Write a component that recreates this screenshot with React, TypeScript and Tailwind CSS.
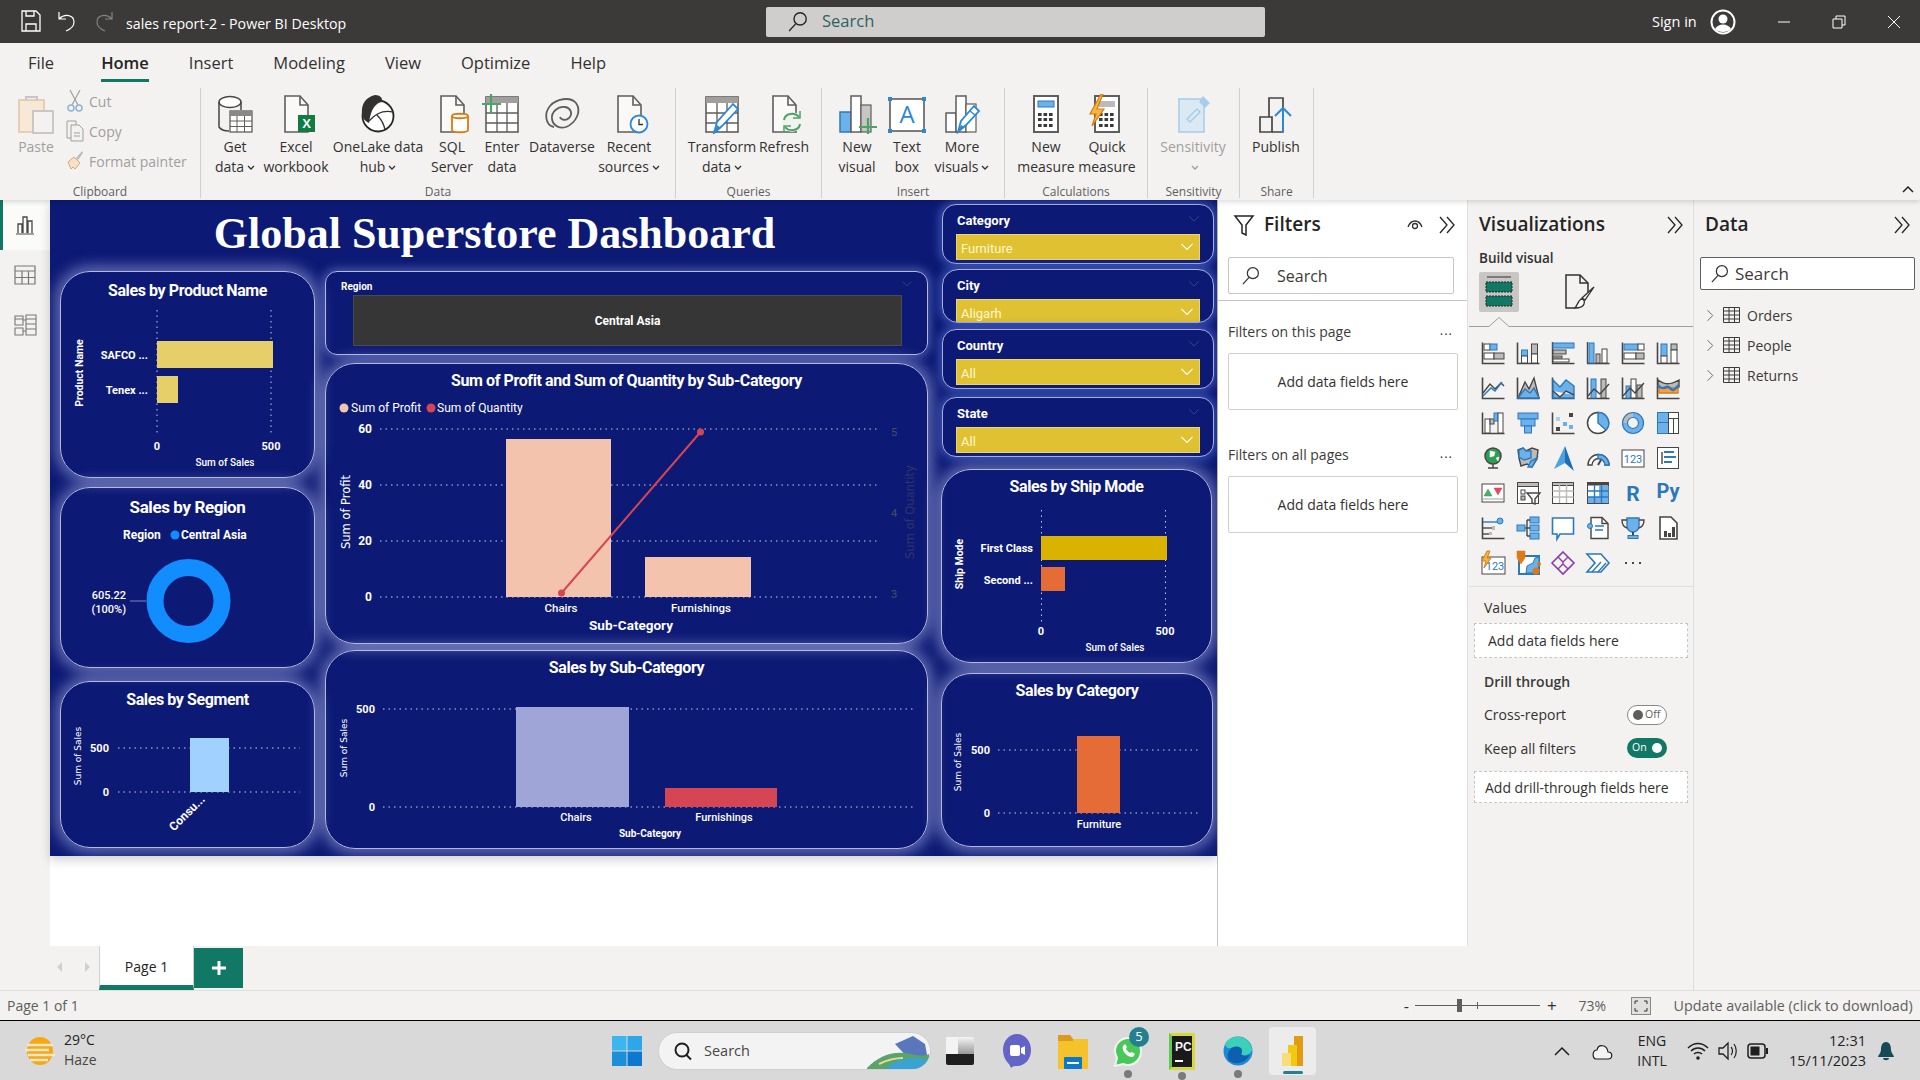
import React from "react";

const D = "#484644";
const B = "#6cb1ea";
const BS = "#2b79bd";
const G = "#bdbbb9";
const W = "#ffffff";

const r = (x: number, y: number, w: number, h: number, f: string, s: string = "none", k?: number) => (
  <rect key={k ?? `${x}-${y}-${w}-${h}-${f}`} x={x} y={y} width={w} height={h} fill={f} stroke={s} strokeWidth={1} />
);
const p = (d: string, s: string = D, f: string = "none", sw: number = 1.4) => (
  <path key={d} d={d} stroke={s} fill={f} strokeWidth={sw} />
);
const Ax = p("M1.5 1.5V22.5H23.5", D, "none", 1.6);
const Bot = p("M1 22.5H23.5", D, "none", 1.6);

function Ic({ children, s = 24, vb = 24 }: { children: React.ReactNode; s?: number; vb?: number }) {
  return (
    <svg width={s} height={s} viewBox={`0 0 ${vb} ${vb}`} className="block shrink-0 overflow-visible">
      {children}
    </svg>
  );
}

const vizIcons: React.ReactNode[] = [
  <>{Ax}{r(3, 3, 6, 6, W, D)}{r(9, 3, 7, 6, B, BS)}{r(3, 12, 10, 6, W, D)}{r(13, 12, 10, 6, G, D)}</>,
  <>{Ax}{r(5.5, 9, 6, 6, B, BS)}{r(5.5, 15, 6, 7, W, D)}{r(15.5, 3, 6, 10, G, D)}{r(15.5, 13, 6, 9, W, D)}</>,
  <>{p("M1.5 1V22.5H23.5", D)}{r(2, 2, 21, 5, B, BS)}{r(2, 9, 13, 4, G, D)}{r(2, 15, 9, 2, G, D)}{r(2, 18, 16, 3, W, D)}</>,
  <>{Bot}{p("M1.5 1V22.5", D)}{r(3, 2, 5, 20, B, BS)}{r(10, 13, 4, 9, G, D)}{r(16, 8, 5, 14, W, D)}</>,
  <>{Ax}{r(3, 3, 14, 6, B, BS)}{r(17, 3, 6, 6, W, D)}{r(3, 12, 12, 6, W, D)}{r(15, 12, 8, 6, G, D)}</>,
  <>{Ax}{r(5, 3, 6, 12, B, BS)}{r(5, 15, 6, 7, W, D)}{r(15, 3, 6, 6, G, D)}{r(15, 9, 6, 13, W, D)}</>,
  <>{Ax}{p("M2 17L9 8l5 5 6-6 3 3", D)}{p("M2 20l8-8 4 3 7-9", BS)}</>,
  <>{Ax}{p("M2 22L9 6l4 7 5-11 5 20z", D, G)}{p("M2 22l7-9 5 4 4-5 5 10z", BS, B)}</>,
  <>{Ax}{p("M2 4l7 7 6-7 8 6v12H2z", BS, B)}{p("M2 15l7 6 6-6 8 4", D, W)}</>,
  <>{Ax}{r(5, 3, 5, 19, B, BS)}{r(15, 3, 5, 19, G, D)}{p("M2 20l6-7 6 5 9-10", D)}</>,
  <>{Ax}{r(5, 10, 5, 12, B, BS)}{r(10, 3, 5, 19, W, D)}{r(16, 9, 5, 13, G, D)}{p("M2 20l7-8 5 5 9-10", D)}</>,
  <>{Ax}{p("M2 4c7 5 12 5 21 0v7c-6 5-14 5-21 0z", D, G)}{p("M3 12h19v5H3z", "#e07a17", "#f0a04b")}{p("M2 9c6 8 8-2 12 3s5 0 9-3", BS, "none", 2.4)}</>,
  <>{Ax}{r(4, 8, 5, 14, W, D)}{r(9, 8, 4, 5, G, D)}{r(13, 2, 4, 8, B, BS)}{r(17, 2, 5, 20, W, D)}</>,
  <>{r(2, 2, 20, 6, B, BS)}{r(5, 8, 14, 7, B, BS)}{r(8.5, 15, 7, 7, B, BS)}</>,
  <>{Ax}{r(5, 6, 4, 4, "#a9d0f0")}{r(12, 11, 4, 4, B)}{r(18, 2, 4, 4, D)}{r(5, 16, 4, 4, D)}{r(18, 14, 4, 4, B)}</>,
  <><circle cx="12" cy="12" r="10.5" fill={W} stroke={D} strokeWidth="1.5" />{p("M12 1.5A10.5 10.5 0 0 1 20 19L12 12z", BS, B)}</>,
  <><circle cx="12" cy="12" r="8" fill="none" stroke={B} strokeWidth="5" />{p("M12 4A8 8 0 0 0 4 12", G, "none", 5)}<circle cx="12" cy="12" r="10.5" fill="none" stroke={BS} strokeWidth="1.2" /><circle cx="12" cy="12" r="5.5" fill="none" stroke={BS} strokeWidth="1.2" /></>,
  <>{r(1.5, 1.5, 11, 10, B, BS)}{r(1.5, 11.5, 11, 11, B, BS)}{r(12.5, 1.5, 10, 6, W, D)}{r(12.5, 7.5, 5, 15, W, D)}{r(17.5, 7.5, 5, 15, W, D)}</>,
  <><circle cx="12" cy="10" r="8" fill="#2f9e55" stroke={D} strokeWidth="1.5" />{p("M9 5l5 1-1 4-4 1zM15 12l3-1-1 4z", W, W, 0.5)}{p("M7 22h10M12 18v4", D)}</>,
  <>{p("M2 4l5-2 3 3 6-3 6 2-1 9-5 8-5-3-6 2-2-8z", D, G)}{p("M3 4l4-2 3 3 5 0v7l-7 2-5-3z", BS, B)}{p("M12 21l3-6 6-3-5 9z", BS, B)}</>,
  <>{p("M14 0L3 23l11-6z", "none", "#4aa3df", 0)}{p("M14 0l9 25-9-8z", "none", "#1c6fb7", 0)}</>,
  <>{p("M2 19a10.500 10.500 0 0 1 21 0h-4a6.500 6.500 0 0 0-13 0z", D, W)}{p("M12 8.500a10.500 10.500 0 0 1 11 10.500h-4a6.500 6.500 0 0 0-7-6.500z", BS, B)}{p("M12 19l3-5", D, "none", 2)}</>,
  <>{r(1, 4, 22, 17, W, D)}<text x="12" y="16.500" textAnchor="middle" fontSize="11" fill={BS} fontFamily="Roboto">123</text></>,
  <>{r(1.5, 1.5, 21, 21, W, D)}{p("M6 6v12", D)}{p("M8 6h10M8 11h12M8 16h8", BS, "none", 2)}</>,
  <>{r(1, 3, 22, 18, W, D)}{p("M3 15l4-7 4 7z", "#2f9e55", "#48ae68", 0.5)}{p("M13 7h8l-4 7z", "#d64554", "#e2495b", 0.5)}{p("M2 18h20", G)}</>,
  <>{r(1.5, 1.5, 21, 21, W, D)}{r(1.5, 1.5, 21, 4, G, D)}{r(5, 9, 4, 4, W, D)}{r(5, 15, 4, 4, G, D)}{p("M11 12h13l-5 6v5l-3-1v-4z", D, W)}</>,
  <>{r(1.5, 1.500, 21, 21, W, D)}{r(1.5, 1.5, 21, 3, G, D)}{p("M1.5 10h21M1.5 16h21M8.500 4v18M15.500 4v18", G)}</>,
  <>{r(1.5, 1.5, 21, 21, W, D)}{r(1.5, 1.5, 21, 3, D)}{r(13, 5, 9.5, 17, B)}{r(2, 16, 11, 6, B)}{p("M1.5 10h21M1.5 16h21M8.500 4v18M15.500 4v18", BS)}</>,
  <><text x="12" y="20" textAnchor="middle" fontSize="21" fontWeight="700" fill={BS} fontFamily="Roboto">R</text></>,
  <><text x="12" y="17" textAnchor="middle" fontSize="20" fontWeight="700" fill={BS} fontFamily="Roboto">Py</text></>,
  <>{Ax}{p("M2 6h14", BS)}<circle cx="19" cy="5" r="3" fill={B} stroke={BS} />{p("M2 12h9", D)}{r(11, 10, 3, 4, G)}{p("M2 18h6", D)}{r(8, 16, 3, 3, G)}</>,
  <>{r(1, 9, 8, 6, B, BS)}{r(14, 1, 9, 6, B, BS)}{r(14, 9, 9, 6, B, BS)}{r(14, 17, 9, 6, B, BS)}{p("M9 12h5M11 4v16M11 4h3M11 20h3", D)}</>,
  <>{p("M1.500 2h21v16H9l-3 5v-5H1.500z", BS, W, 1.6)}</>,
  <>{p("M5 1.500h11l6 6v15H5z", D, W)}{p("M16 1.500v6h6", D)}<circle cx="4" cy="10" r="2.500" fill={B} stroke={BS} />{p("M9 10h9M9 14h8", BS)}</>,
  <>{p("M6 2h12v8a6 6 0 0 1-12 0z", BS, B)}{p("M6 4H1c0 5 2 7 5 8M18 4h5c0 5-2 7-5 8", D)}{p("M12 16v3", D, "none", 2)}{r(7, 19.500, 10, 3, B, BS)}</>,
  <>{p("M4 1h11l6 6v16H4z", D, W, 1.6)}{r(8, 15, 3, 6, D)}{r(12, 17, 3, 4, D)}{r(16, 11, 3, 10, D)}</>,
  <>{r(1, 6, 23, 17, W, D)}<text x="14" y="19" textAnchor="middle" fontSize="11" fill={BS} fontFamily="Roboto">123</text>{p("M6 0L1 10h4l-2 7 7-10H6l3-7z", "#d97b12", "#f4b642", 1)}</>,
  <>{p("M3 5h20v18H3z", BS, W, 2)}{p("M10 22l1-7 6-3 2-5 4-1v9l-4 7z", BS, B, 1)}{p("M1 0h8v7l-4 6-4-6z", "#d97b12", "#e07a17", 0.5)}<circle cx="20" cy="20" r="3.500" fill="#d97b12" /><circle cx="23" cy="13" r="2" fill="#d97b12" /></>,
  <>{p("M12 1l11 11-11 11L1 12z", "#8a3ea8", "none", 1.6)}{p("M7 6l5 5 5-5M7 18l5-5 5 5M12 11v2", "#8a3ea8")}</>,
  <>{p("M1 3h14l8 9-8 9H1l8-9z", BS, W, 1.6)}{p("M6 21l9-10M12 21l8-9", BS)}</>,
  <>{r(4, 11, 2, 2, D)}{r(11, 11, 2, 2, D)}{r(18, 11, 2, 2, D)}</>,
];

function Chev({ c = "#252423", dir = "right", s = 20 }: { c?: string; dir?: string; s?: number }) {
  return (
    <svg width={s} height={s} viewBox="0 0 20 20" className="block shrink-0">
      {dir === "right" && <path d="M2 2l7 8-7 8M9 2l7 8-7 8" fill="none" stroke={c} strokeWidth="1.3" />}
      {dir === "one" && <path d="M6 3l7 7-7 7" fill="none" stroke={c} strokeWidth="1.2" />}
      {dir === "down" && <path d="M3 6l7 7 7-7" fill="none" stroke={c} strokeWidth="1.4" />}
    </svg>
  );
}

function SearchIc({ c = "#323130", s = 20 }: { c?: string; s?: number }) {
  return (
    <svg width={s} height={s} viewBox="0 0 20 20" className="block shrink-0">
      <circle cx="12.500" cy="7.500" r="5.800" fill="none" stroke={c} strokeWidth="1.3" />
      <path d="M8.500 12L2 19" stroke={c} strokeWidth="1.3" />
    </svg>
  );
}

function Caret({ c = "#323130" }: { c?: string }) {
  return <svg width="8" height="6" viewBox="0 0 8 6" className="inline-block ml-[3px]"><path d="M1 1l3 3 3-3" fill="none" stroke={c} strokeWidth="1.3" /></svg>;
}

// ---- ribbon icons, drawn on a 40 box
const rib = { s: "#605e5c", f: "#faf9f8" };
const doc = <path d="M9 2h15l8 9v27H9z" fill={rib.f} stroke={rib.s} strokeWidth="1.6" />;
const fold = <path d="M24 2v9h8" fill="none" stroke={rib.s} strokeWidth="1.6" />;
const gridTable = (
  <>
    <rect x="4" y="3" width="32" height="35" fill="#fff" stroke={rib.s} strokeWidth="1.6" />
    <rect x="4" y="3" width="32" height="6" fill="#a19f9d" />
    <path d="M4 19h32M4 29h32M15 9v29M25 9v29" stroke={rib.s} strokeWidth="1.300" />
  </>
);
const pencil = <><path d="M16 38l3-11 13-15 5 5-13 14z" fill="#fff" stroke="#2b88d8" strokeWidth="1.800" /><path d="M28 17l5 4" stroke="#2b88d8" strokeWidth="1.500" /><path d="M16 38l3-7 4 2z" fill="#2b88d8" /></>;
const calc = (
  <>
    <rect x="8" y="2" width="24" height="36" fill="#fff" stroke={rib.s} strokeWidth="2" />
    {[12, 17.500, 23].map((x) => [19, 24, 30].map((y) => <rect key={`${x}-${y}`} x={x} y={y} width="3.600" height="3" fill="#3b3a39" />))}
  </>
);

function RIc({ children }: { children: React.ReactNode }) {
  return <svg width="40" height="40" viewBox="0 0 40 40" className="block">{children}</svg>;
}

const ribbonIcons: Record<string, React.ReactNode> = {
  get: <RIc><ellipse cx="15" cy="8" rx="11" ry="5.500" fill="#fff" stroke="#484644" strokeWidth="1.500" /><path d="M4 8v25c2 3 6 4 10 4M26 8v8" fill="none" stroke="#484644" strokeWidth="1.500" /><rect x="15" y="17" width="22" height="21" fill="#fff" stroke="#605e5c" strokeWidth="1.300" /><rect x="15" y="17" width="22" height="5" fill="#8a8886" /><path d="M15 27h22M15 32.500h22M22 22v16M29.500 22v16" stroke="#605e5c" /></RIc>,
  excel: <RIc>{doc}{fold}<rect x="22" y="21" width="17" height="17" fill="#107c41" /><text x="30.500" y="34" textAnchor="middle" fontSize="13" fontWeight="700" fill="#fff" fontFamily="Liberation Sans">X</text></RIc>,
  lake: <RIc><circle cx="20" cy="22" r="15.500" fill="#fff" stroke="#252423" strokeWidth="1.800" /><path d="M4 20C3 10 8 3 17 1c5 0 8 3 7 7-6 1-11 6-13 21-4-2-7-5-7-9z" fill="#323130" /><path d="M11 27c7-8 15-11 24-9M19 21c4 4 7 9 8 15" fill="none" stroke="#323130" strokeWidth="1.300" /></RIc>,
  sql: <RIc>{doc}{fold}<path d="M20 22c0-3 16-3 16 0v14c0 3-16 3-16 0z" fill="#fff" stroke="#d97b12" strokeWidth="1.800" /><path d="M20 22c0 3 16 3 16 0" fill="none" stroke="#d97b12" strokeWidth="1.800" /></RIc>,
  enter: <RIc>{gridTable}<path d="M-1 10h20M9 -1v21" stroke="#4aa564" strokeWidth="2.200" /></RIc>,
  verse: <RIc><path d="M12 33C3 31 2 19 8 12 14 5 28 2 34 9c6 8 0 20-10 24-6 2-13-1-14-8-1-7 6-13 13-12 6 1 8 7 4 11-3 3-8 2-9-1" fill="none" stroke="#605e5c" strokeWidth="1.800" /></RIc>,
  recent: <RIc>{doc}{fold}<circle cx="30" cy="30" r="8.500" fill="#fff" stroke="#2b88d8" strokeWidth="1.800" /><path d="M30 25v5.500h4" fill="none" stroke="#323130" strokeWidth="1.300" /></RIc>,
  transform: <RIc>{gridTable}<path d="M12 39l3-11 16-18 5 5-16 17z" fill="#fff" stroke="#2b88d8" strokeWidth="1.800" /><path d="M12 39l3-8 4 3z" fill="#2b88d8" /></RIc>,
  refresh: <RIc>{doc}{fold}<circle cx="28" cy="28" r="10" fill="#f3f2f1" /><path d="M20 26c1-7 11-8 15-3M36 30c-1 7-11 8-15 3" fill="none" stroke="#4aa564" strokeWidth="2" /><path d="M36 17v7h-7M20 39v-7h7" fill="none" stroke="#4aa564" strokeWidth="1.500" /></RIc>,
  newv: <RIc><rect x="3" y="18" width="11" height="20" fill="#6cb1ea" stroke="#2b79bd" strokeWidth="1.500" /><rect x="14" y="2" width="10" height="36" fill="#fff" stroke="#605e5c" strokeWidth="1.500" /><rect x="24" y="11" width="10" height="27" fill="#c8c6c4" stroke="#605e5c" strokeWidth="1.200" /><path d="M22 33h18M31 24v16" stroke="#4aa564" strokeWidth="2.200" /></RIc>,
  text: <RIc><rect x="3" y="5" width="34" height="32" fill="#fff" stroke="#484644" strokeWidth="1.400" /><text x="20" y="29" textAnchor="middle" fontSize="24" fill="#2b88d8" fontFamily="Open Sans">A</text>{[[3, 5], [37, 5], [3, 37], [37, 37]].map(([x, y]) => <rect key={`${x}${y}`} x={x - 2} y={y - 2} width="4" height="4" fill="#2b88d8" />)}</RIc>,
  more: <RIc><rect x="4" y="19" width="10" height="19" fill="#fff" stroke="#605e5c" strokeWidth="1.500" /><rect x="14" y="2" width="10" height="36" fill="#fff" stroke="#605e5c" strokeWidth="1.500" /><rect x="24" y="10" width="10" height="28" fill="#fff" stroke="#605e5c" strokeWidth="1.200" />{pencil}</RIc>,
  measure: <RIc>{calc}<rect x="12" y="7" width="16" height="6" fill="#6cb1ea" stroke="#2b79bd" /></RIc>,
  quick: <RIc>{calc}<rect x="12" y="7" width="16" height="6" fill="#bdbbb9" /><path d="M14 0L3 20h6l-4 12 12-17h-7l6-15z" fill="#f4b642" stroke="#d97b12" strokeWidth="1.200" /></RIc>,
  sens: <RIc><rect x="6" y="5" width="25" height="33" fill="#dbe9f5" stroke="#a9cde8" strokeWidth="1.600" /><path d="M14 25l10-10 3 3-10 10z" fill="none" stroke="#a9cde8" strokeWidth="1.500" /><path d="M26 8l4-6 7 7-5 5z" fill="#a9cde8" /></RIc>,
  publish: <RIc><path d="M4 23h12v15H4z" fill="none" stroke="#484644" strokeWidth="1.700" /><path d="M13 23V4h14v34H16" fill="none" stroke="#484644" strokeWidth="1.700" /><path d="M27 38V14M19 22l8-8 8 8" fill="none" stroke="#2b88d8" strokeWidth="2" /></RIc>,
};

function RBtn({ w, ic, l1, l2, caret, off }: { w: string; ic: string; l1: string; l2?: string; caret?: boolean; off?: boolean }) {
  return (
    <div className={`${w} flex flex-col items-center pt-[6px] shrink-0`}>
      <div className="h-[43px]">{ribbonIcons[ic]}</div>
      <div className={`text-[14px] leading-[20px] whitespace-nowrap ${off ? "text-[#a19f9d]" : "text-[#323130]"}`}>{l1}</div>
      {l2 !== undefined && (
        <div className={`h-[20px] text-[14px] leading-[20px] whitespace-nowrap ${off ? "text-[#a19f9d]" : "text-[#323130]"}`}>
          {l2}
          {caret && <Caret c={off ? "#a19f9d" : "#323130"} />}
        </div>
      )}
    </div>
  );
}

function RGroup({ w, label, children, pl }: { w: string; label: string; children: React.ReactNode; pl: string }) {
  return (
    <div className={`${w} h-[110px] border-r border-[#d2d0ce] flex flex-col shrink-0`}>
      <div className={`flex flex-1 ${pl}`}>{children}</div>
      <div className="text-[12px] leading-[14px] text-center text-[#605e5c] translate-y-[1px]">{label}</div>
    </div>
  );
}

function TitleBar() {
  return (
    <div className="h-[43px] bg-[#3b3a39] flex items-center text-white">
      <div className="w-[766px] flex items-center shrink-0">
        <svg width="20" height="22" viewBox="0 0 20 22" className="ml-[21px]"><path d="M1 1h14l4 4v16H1zM5 21v-7h10v7M5 1v5h8V1" fill="none" stroke="#fff" strokeWidth="1.300" /></svg>
        <svg width="20" height="22" viewBox="0 0 20 22" className="ml-[16px]"><path d="M2 2v7h7M2 9c6-6 15-4 15 3 0 4-3 7-8 9" fill="none" stroke="#fff" strokeWidth="1.200" /></svg>
        <svg width="20" height="22" viewBox="0 0 20 22" className="ml-[17px]"><path d="M18 2v7h-7M18 9c-6-6-15-4-15 3 0 4 3 7 8 9" fill="none" stroke="#85837f" strokeWidth="1.200" /></svg>
        <span className="ml-[12px] mt-[4px] text-[14.200px] whitespace-nowrap">sales report-2 - Power BI Desktop</span>
      </div>
      <div className="w-[499px] h-[30px] bg-[#cfcecc] rounded-[2px] flex items-center pl-[21px] gap-[14px] shrink-0">
        <SearchIc c="#252423" s={21} />
        <span className="text-[16.500px] text-[#2f625c]">Search</span>
      </div>
      <div className="flex-1 flex items-center pl-[387px] text-[14.500px]">
        <span className="whitespace-nowrap">Sign in</span>
        <svg width="26" height="26" viewBox="0 0 26 26" className="ml-[13px] shrink-0"><circle cx="13" cy="13" r="11.500" fill="none" stroke="#fff" strokeWidth="2" /><circle cx="13" cy="10" r="4.500" fill="#fff" /><path d="M5 20c3-6 13-6 16 0-3 4-13 4-16 0z" fill="#fff" /></svg>
        <svg width="14" height="14" viewBox="0 0 14 14" className="ml-[41px] shrink-0"><path d="M1 7h12" stroke="#fff" /></svg>
        <svg width="14" height="14" viewBox="0 0 14 14" className="ml-[41px] shrink-0"><path d="M1 4h9v9H1zM4 4V1h9v9h-3" fill="none" stroke="#fff" /></svg>
        <svg width="14" height="14" viewBox="0 0 14 14" className="ml-[41px] shrink-0"><path d="M1 1l12 12M13 1L1 13" stroke="#fff" /></svg>
      </div>
    </div>
  );
}

function Ribbon() {
  return (
    <div className="h-[157px] bg-[#f3f2f1] relative shadow-[0_2px_5px_rgba(0,0,0,0.14)] z-10">
      <div className="h-[45px] flex pl-[28px] gap-[40px] text-[#323130] text-[16.500px] pt-[8px]">
        <div className="mr-[7px]">File</div>
        <div className="relative font-semibold text-[#252423]">
          Home
          <div className="absolute left-0 right-0 top-[28px] h-[3px] bg-[#117865]" />
        </div>
        <div>Insert</div>
        <div>Modeling</div>
        <div>View</div>
        <div>Optimize</div>
        <div>Help</div>
      </div>
      <div className="flex">
        <RGroup w="w-[201px]" label="Clipboard" pl="pl-[11px]">
          <div className="w-[50px] flex flex-col items-center pt-[6px]">
            <svg width="38" height="40" viewBox="0 0 38 40" className="mb-[3px]"><rect x="2" y="6" width="25" height="32" fill="#f8e9d6" stroke="#ddc5a5" strokeWidth="1.500" /><path d="M9 6V3h11v3" fill="none" stroke="#c8c6c4" strokeWidth="2" /><rect x="16" y="17" width="20" height="22" fill="#f3f2f1" stroke="#bdbbb9" strokeWidth="1.500" /></svg>
            <div className="text-[14px] leading-[20px] text-[#a19f9d]">Paste</div>
          </div>
          <div className="flex flex-col pl-[5px] text-[14px] text-[#a19f9d] mt-[-2px]">
            <div className="h-[30px] flex items-center gap-[5px]"><svg width="18" height="24" viewBox="0 0 18 24"><path d="M4 1l8 15M14 1L6 16" stroke="#a19f9d" strokeWidth="1.200" /><circle cx="5" cy="19" r="3" fill="none" stroke="#8fb4d8" strokeWidth="1.500" /><circle cx="13" cy="19" r="3" fill="none" stroke="#8fb4d8" strokeWidth="1.500" /></svg>Cut</div>
            <div className="h-[30px] flex items-center gap-[5px]"><svg width="18" height="24" viewBox="0 0 18 24"><path d="M1 2h9v17H1z" fill="none" stroke="#a19f9d" /><path d="M5 6h8l4 4v12H5z" fill="#f3f2f1" stroke="#a19f9d" /><path d="M8 14h6M8 17h6" stroke="#a19f9d" /></svg>Copy</div>
            <div className="h-[30px] flex items-center gap-[5px] whitespace-nowrap"><svg width="18" height="24" viewBox="0 0 18 24"><path d="M2 13l6-5 6 6-5 6-2-2-2 2z" fill="#f8e0c8" stroke="#d9a878" /><path d="M10 9l6-7 1 2-5 7z" fill="#bdbbb9" /></svg>Format painter</div>
          </div>
        </RGroup>
        <RGroup w="w-[475px]" label="Data" pl="pl-[4px]">
          <RBtn w="w-[60px]" ic="get" l1="Get" l2="data" caret />
          <RBtn w="w-[62px]" ic="excel" l1="Excel" l2="workbook" />
          <RBtn w="w-[102px]" ic="lake" l1="OneLake data" l2="hub" caret />
          <RBtn w="w-[46px]" ic="sql" l1="SQL" l2="Server" />
          <RBtn w="w-[54px]" ic="enter" l1="Enter" l2="data" />
          <RBtn w="w-[66px]" ic="verse" l1="Dataverse" />
          <RBtn w="w-[68px]" ic="recent" l1="Recent" l2="sources" caret />
        </RGroup>
        <RGroup w="w-[146px]" label="Queries" pl="pl-[8px]">
          <RBtn w="w-[76px]" ic="transform" l1="Transform" l2="data" caret />
          <RBtn w="w-[48px]" ic="refresh" l1="Refresh" />
        </RGroup>
        <RGroup w="w-[183px]" label="Insert" pl="pl-[10px]">
          <RBtn w="w-[50px]" ic="newv" l1="New" l2="visual" />
          <RBtn w="w-[50px]" ic="text" l1="Text" l2="box" />
          <RBtn w="w-[60px]" ic="more" l1="More" l2="visuals" caret />
        </RGroup>
        <RGroup w="w-[143px]" label="Calculations" pl="pl-[10px]">
          <RBtn w="w-[62px]" ic="measure" l1="New" l2="measure" />
          <RBtn w="w-[60px]" ic="quick" l1="Quick" l2="measure" />
        </RGroup>
        <RGroup w="w-[92px]" label="Sensitivity" pl="pl-[5px]">
          <RBtn w="w-[80px]" ic="sens" l1="Sensitivity" l2="" caret off />
        </RGroup>
        <RGroup w="w-[74px]" label="Share" pl="pl-[7px]">
          <RBtn w="w-[58px]" ic="publish" l1="Publish" />
        </RGroup>
      </div>
      <svg width="12" height="8" viewBox="0 0 12 8" className="absolute right-[6px] top-[143px]"><path d="M1 6l5-5 5 5" fill="none" stroke="#252423" strokeWidth="1.500" /></svg>
    </div>
  );
}

function Rail() {
  return (
    <div className="w-[50px] shrink-0 bg-[#f3f2f1] flex flex-col">
      <div className="h-[50px] bg-[#fbfbfa] border-l-[3px] border-[#117865] flex items-center justify-center pr-[3px]">
        <svg width="20" height="20" viewBox="0 0 20 20"><path d="M1 19h18" stroke="#484644" /><path d="M3 18V9h4v9M8 18V2h4v16M13 18V6h4v12" fill="none" stroke="#484644" strokeWidth="1.300" /></svg>
      </div>
      <div className="h-[50px] flex items-center justify-center">
        <svg width="22" height="20" viewBox="0 0 22 20"><path d="M1 1h20v18H1zM1 6h20M1 12.500h20M8 6v13M14.500 6v13" fill="none" stroke="#797775" strokeWidth="1.200" /></svg>
      </div>
      <div className="h-[50px] flex items-center justify-center">
        <svg width="24" height="24" viewBox="0 0 24 24"><path d="M2 3h8v9H2zM2 6h8M2 15h8v7H2zM13 2h10v20H13zM13 6h10M13 11h10M13 16h10M10 7h3M10 18h3" fill="none" stroke="#797775" strokeWidth="1.100" /></svg>
      </div>
    </div>
  );
}

const bigShadow = "shadow-[0_0_14px_5px_rgba(165,175,225,0.55)]";

function T({ x, y, a = "middle", s = 11, w = 700, c = "#ffffff", rot, f, children }: { x: number; y: number; a?: "start" | "middle" | "end"; s?: number; w?: number; c?: string; rot?: number; f?: string; children: React.ReactNode }) {
  return (
    <text x={x} y={y} textAnchor={a} dominantBaseline="central" fontSize={s} fontWeight={w} fill={c} fontFamily={f} transform={rot ? `rotate(${rot} ${x} ${y})` : undefined}>
      {children}
    </text>
  );
}
const Dot = ({ x1, y1, x2, y2 }: { x1: number; y1: number; x2: number; y2: number }) => (
  <line x1={x1} y1={y1} x2={x2} y2={y2} stroke="#c9cdea" strokeWidth="1" strokeDasharray="1.500 4" />
);
const Bar = ({ x, y, x2, y2, f }: { x: number; y: number; x2: number; y2: number; f: string }) => <rect x={x} y={y} width={x2 - x} height={y2 - y} fill={f} />;

// the chart svg keeps page coordinates in its viewBox, below the html title of the card
function Chart({ x, y, w, h, children }: { x: number; y: number; w: number; h: number; children: React.ReactNode }) {
  return (
    <svg width={w} height={h} viewBox={`${x} ${y} ${w} ${h}`} className="block font-['Roboto',sans-serif] overflow-visible">
      {children}
    </svg>
  );
}

function CardTitle({ h, size, children }: { h: string; size: string; children: React.ReactNode }) {
  return <div className={`${h} ${size} flex items-end justify-center font-bold text-white font-['Roboto',sans-serif] tracking-[-0.4px] whitespace-nowrap leading-[24px]`}>{children}</div>;
}

function Slicer({ box, label, value, yellow, clip }: { box: string; label: string; value: string; yellow: string; clip?: boolean }) {
  return (
    <div className={`${box} w-[272px] border border-[#a9aedb] bg-[#0d1a75] overflow-hidden font-['Roboto',sans-serif] shadow-[0_0_8px_3px_rgba(80,110,210,0.6)] ${clip ? "rounded-[16px]" : "rounded-[14px]"}`}>
      <div className="h-[29px] flex items-center justify-between pl-[14px] pr-[12px] pt-[3px]">
        <span className="text-[13px] font-bold text-white leading-[20px]">{label}</span>
        <span className="pb-[5px]"><Chev dir="down" c="#39458f" s={14} /></span>
      </div>
      <div className={`${yellow} mx-[13px] bg-[#e0c132] border border-[#ead57a] flex items-center justify-between pl-[4px] pr-[4px] text-[13px] text-[#fff7cf]`}>
        <span className="pt-[4px]">{value}</span>
        <Chev dir="down" c="#ffffff" s={16} />
      </div>
    </div>
  );
}

function Canvas() {
  return (
    <div className="w-[1168px] shrink-0 border-r border-[#c8c6c4] bg-white">
      <div className="h-[656px] bg-[#0d1a75] flex shadow-[0_4px_10px_rgba(0,0,0,0.18)] overflow-hidden pl-[10px]">
        <div className="w-[881px] shrink-0">
          <div className="h-[71px] flex items-center justify-center font-['Liberation_Serif',serif] font-bold text-[44px] text-white whitespace-nowrap pb-[4px] pr-[12px]">Global Superstore Dashboard</div>
          <div className="flex gap-[10px]">
            <div className="w-[255px] shrink-0">
              <div className={`h-[207px] rounded-[30px] border border-[#b5b9e0] ${bigShadow}`}>
                <CardTitle h="h-[31px]" size="text-[16px]">Sales by Product Name</CardTitle>
                <Chart x={61} y={303} w={253} h={174}>
                  <Dot x1={157} y1={310} x2={157} y2={436} />
                  <Dot x1={271} y1={310} x2={271} y2={436} />
                  <Bar x={157} y={341} x2={273} y2={368} f="#e6cf68" />
                  <Bar x={157} y={376} x2={178} y2={403} f="#e6cf68" />
                  <T x={148} y={355} a="end">SAFCO ...</T>
                  <T x={148} y={390} a="end">Tenex ...</T>
                  <T x={79} y={373} rot={-90} s={10.500}>Product Name</T>
                  <T x={157} y={446}>0</T>
                  <T x={271} y={446}>500</T>
                  <T x={225} y={462} s={10} w={500}>Sum of Sales</T>
                </Chart>
              </div>
              <div className={`h-[181px] mt-[9px] rounded-[30px] border border-[#b5b9e0] ${bigShadow}`}>
                <CardTitle h="h-[31px]" size="text-[17px]">Sales by Region</CardTitle>
                <Chart x={61} y={519} w={253} h={148}>
                  <T x={123} y={535} a="start" s={12}>Region</T>
                  <circle cx={175} cy={535} r={4.500} fill="#118dff" />
                  <T x={181} y={535} a="start" s={12}>Central Asia</T>
                  <circle cx={188.500} cy={601} r={33.500} fill="none" stroke="#118dff" strokeWidth={17} />
                  <T x={126} y={595} a="end" s={11} w={500}>605.22</T>
                  <T x={126} y={609} a="end" s={11} w={500}>(100%)</T>
                  <line x1={130} y1={601} x2={146} y2={601} stroke="#7f86bd" />
                </Chart>
              </div>
              <div className={`h-[167px] mt-[13px] rounded-[30px] border border-[#b5b9e0] ${bigShadow}`}>
                <CardTitle h="h-[30px]" size="text-[16px]">Sales by Segment</CardTitle>
                <Chart x={61} y={712} w={253} h={135}>
                  <Dot x1={118} y1={748} x2={300} y2={748} />
                  <Dot x1={118} y1={792} x2={300} y2={792} />
                  <Bar x={190} y={738} x2={229} y2={792} f="#a0d1ff" />
                  <T x={109} y={748} a="end">500</T>
                  <T x={109} y={792} a="end">0</T>
                  <T x={78} y={756} rot={-90} s={9} w={400} f="DejaVu Sans">Sum of Sales</T>
                  <T x={187} y={813} rot={-45} s={12}>Consu...</T>
                </Chart>
              </div>
            </div>
            <div className="w-[603px] shrink-0">
              <div className="h-[84px] rounded-[12px] border border-[#b5b9e0] shadow-[0_0_8px_3px_rgba(120,140,215,0.5)] font-['Roboto',sans-serif]">
                <div className="h-[23px] flex items-center justify-between pl-[15px] pr-[14px] pt-[5px]">
                  <span className="text-[10px] font-bold text-white">Region</span>
                  <span className="pb-[4px]"><Chev dir="down" c="#39458f" s={12} /></span>
                </div>
                <div className="ml-[27px] w-[549px] h-[51px] bg-[#363636] border border-[#4a4a4a] flex items-center justify-center text-[12px] font-bold text-white">Central Asia</div>
              </div>
              <div className={`h-[281px] mt-[8px] rounded-[30px] border border-[#b5b9e0] ${bigShadow}`}>
                <CardTitle h="h-[29px]" size="text-[16px]">Sum of Profit and Sum of Quantity by Sub-Category</CardTitle>
                <Chart x={326} y={393} w={601} h={250}>
                  <circle cx={344} cy={408} r={4.500} fill="#f4c3ad" />
                  <T x={351} y={408} a="start" s={12} w={400}>Sum of Profit</T>
                  <circle cx={431} cy={408} r={4.500} fill="#d64554" />
                  <T x={437} y={408} a="start" s={12} w={400}>Sum of Quantity</T>
                  {[429, 485, 541, 597].map((y) => <Dot key={y} x1={380} y1={y} x2={880} y2={y} />)}
                  <Bar x={506} y={439} x2={611} y2={597} f="#f4c3ad" />
                  <Bar x={645} y={557} x2={751} y2={597} f="#f4c3ad" />
                  <line x1={561.500} y1={593} x2={700.500} y2={432} stroke="#d64554" strokeWidth={2} />
                  <circle cx={561.500} cy={593} r={3.500} fill="#d64554" />
                  <circle cx={700.500} cy={432} r={3.500} fill="#d64554" />
                  <T x={372} y={429} a="end" s={12}>60</T>
                  <T x={372} y={485} a="end" s={12}>40</T>
                  <T x={372} y={541} a="end" s={12}>20</T>
                  <T x={372} y={597} a="end" s={12}>0</T>
                  <T x={346} y={512} rot={-90} s={11.500} w={400} f="DejaVu Sans">Sum of Profit</T>
                  <T x={561} y={608} w={500} s={11.500}>Chairs</T>
                  <T x={701} y={608} w={500} s={11.500}>Furnishings</T>
                  <T x={631} y={625} s={13.500}>Sub-Category</T>
                  <T x={894} y={432} s={11} w={400} c="#4b4b66">5</T>
                  <T x={894} y={513} s={11} w={400} c="#4b4b66">4</T>
                  <T x={894} y={594} s={11} w={400} c="#4b4b66">3</T>
                  <T x={910} y={512} rot={-90} s={11.500} w={400} c="#2f3668" f="DejaVu Sans">Sum of Quantity</T>
                </Chart>
              </div>
              <div className={`h-[199px] mt-[6px] rounded-[30px] border border-[#b5b9e0] ${bigShadow}`}>
                <CardTitle h="h-[29px]" size="text-[16px]">Sales by Sub-Category</CardTitle>
                <Chart x={326} y={680} w={601} h={168}>
                  <Dot x1={383} y1={709} x2={916} y2={709} />
                  <Dot x1={383} y1={807} x2={916} y2={807} />
                  <Bar x={516} y={707} x2={629} y2={807} f="#a0a5d7" />
                  <Bar x={665} y={788} x2={777} y2={807} f="#d64554" />
                  <T x={375} y={709} a="end">500</T>
                  <T x={375} y={807} a="end">0</T>
                  <T x={344} y={748} rot={-90} s={9} w={400} f="DejaVu Sans">Sum of Sales</T>
                  <T x={576} y={817} w={500}>Chairs</T>
                  <T x={724} y={817} w={500}>Furnishings</T>
                  <T x={650} y={833} s={10}>Sub-Category</T>
                </Chart>
              </div>
            </div>
          </div>
        </div>
        <div className="ml-[1px] pt-[4px] w-[272px] shrink-0">
          <Slicer box="h-[60px]" label="Category" value="Furniture" yellow="h-[26px]" />
          <div className="mt-[5px]"><Slicer box="h-[54px]" label="City" value="Aligarh" yellow="h-[26px]" clip /></div>
          <div className="mt-[6px]"><Slicer box="h-[60px]" label="Country" value="All" yellow="h-[26px]" /></div>
          <div className="mt-[8px]"><Slicer box="h-[60px]" label="State" value="All" yellow="h-[26px]" /></div>
          <div className={`h-[194px] w-[271px] ml-[-1px] mt-[12px] rounded-[30px] border border-[#b5b9e0] ${bigShadow}`}>
            <CardTitle h="h-[29px]" size="text-[16px]">Sales by Ship Mode</CardTitle>
            <Chart x={942} y={499} w={269} h={163}>
              <Dot x1={1041.500} y1={510} x2={1041.500} y2={622} />
              <Dot x1={1165.500} y1={510} x2={1165.500} y2={622} />
              <Bar x={1041} y={536} x2={1167} y2={560} f="#d9b300" />
              <Bar x={1041} y={567} x2={1065} y2={591} f="#e66c37" />
              <T x={1033} y={548} a="end">First Class</T>
              <T x={1033} y={580} a="end">Second ...</T>
              <T x={959} y={564} rot={-90} s={10.500}>Ship Mode</T>
              <T x={1041} y={631}>0</T>
              <T x={1165} y={631}>500</T>
              <T x={1115} y={647} s={10} w={500}>Sum of Sales</T>
            </Chart>
          </div>
          <div className={`h-[174px] w-[272px] ml-[-1px] mt-[10px] rounded-[30px] border border-[#b5b9e0] ${bigShadow}`}>
            <CardTitle h="h-[29px]" size="text-[16px]">Sales by Category</CardTitle>
            <Chart x={942} y={703} w={270} h={143}>
              <Dot x1={998} y1={750} x2={1200} y2={750} />
              <Dot x1={998} y1={813} x2={1200} y2={813} />
              <Bar x={1077} y={736} x2={1120} y2={813} f="#e66c37" />
              <T x={990} y={750} a="end">500</T>
              <T x={990} y={813} a="end">0</T>
              <T x={958} y={762} rot={-90} s={9} w={400} f="DejaVu Sans">Sum of Sales</T>
              <T x={1099} y={824} w={500}>Furniture</T>
            </Chart>
          </div>
        </div>
      </div>
    </div>
  );
}

function FiltersPane() {
  const Sec = ({ title, cls }: { title: string; cls: string }) => (
    <div className={cls}>
      <div className="h-[20px] flex items-center justify-between pr-[4px] text-[14px] text-[#3b3a39]">
        <span>{title}</span>
        <span className="text-[13px] tracking-[1px] text-[#323130] pb-[1px]">...</span>
      </div>
      <div className="mt-[12px] mr-[-1px] h-[57px] bg-white border border-[#d2d0ce] rounded-[2px] flex items-center justify-center text-[14px] text-[#323130]">Add data fields here</div>
    </div>
  );
  return (
    <div className="w-[250px] shrink-0 bg-white border-r border-[#e1dfdd]">
      <div className="h-[57px] flex items-center pl-[15px] pr-[9px] pb-[8px]">
        <svg width="22" height="22" viewBox="0 0 22 22" className="shrink-0"><path d="M2 2h18l-7 9v10l-4-2v-8z" fill="none" stroke="#252423" strokeWidth="1.500" /></svg>
        <span className="ml-[9px] text-[19px] font-semibold text-[#252423]">Filters</span>
        <svg width="18" height="16" viewBox="0 0 18 16" className="ml-auto"><path d="M2 10c3-8 11-8 14 0" fill="none" stroke="#323130" strokeWidth="1.300" /><circle cx="9" cy="9" r="2.500" fill="none" stroke="#323130" strokeWidth="1.300" /></svg>
        <span className="ml-[14px]"><Chev /></span>
      </div>
      <div className="mx-[10px] w-[226px] h-[37px] border border-[#c8c6c4] rounded-[2px] flex items-center pl-[12px] gap-[17px] text-[16px] text-[#3b3a39]">
        <SearchIc s={19} />
        Search
      </div>
      <div className="mt-[6px] border-t border-[#c8c6c4]" />
      <Sec title="Filters on this page" cls="pl-[10px] pr-[10px] pt-[20px]" />
      <Sec title="Filters on all pages" cls="pl-[10px] pr-[10px] pt-[34px]" />
    </div>
  );
}

function VizPane() {
  const Dashed = ({ cls, text }: { cls: string; text: string }) => (
    <div className={`mx-[5px] bg-white border border-dashed border-[#c8c6c4] flex items-center text-[14px] text-[#323130] whitespace-nowrap ${cls}`}>{text}</div>
  );
  return (
    <div className="w-[225px] shrink-0 bg-[#f3f2f1] border-r border-[#e1dfdd] h-[790px]">
      <div className="h-[57px] flex items-center pl-[10px] pr-[7px] pb-[8px]">
        <span className="text-[19px] font-semibold text-[#252423]">Visualizations</span>
        <span className="ml-auto"><Chev /></span>
      </div>
      <div className="pl-[10px] h-[15px] text-[13.500px] font-semibold leading-[15px] text-[#323130] mt-[-6px]">Build visual</div>
      <div className="flex pl-[10px] mt-[6px] items-center">
        <div className="w-[40px] h-[40px] bg-[#c8c6c4] rounded-[2px] flex items-center justify-center">
          <svg width="30" height="34" viewBox="0 0 30 34"><path d="M3 2h24" stroke="#323130" /><rect x="2" y="7" width="26" height="10" fill="#117865" stroke="#252423" strokeDasharray="2 1" /><rect x="2" y="21" width="26" height="10" fill="#117865" stroke="#252423" strokeDasharray="2 1" /></svg>
        </div>
        <svg width="34" height="40" viewBox="0 0 34 40" className="ml-[44px]"><path d="M12 36H3V3h14l8 8v9" fill="none" stroke="#323130" strokeWidth="1.500" /><path d="M17 3v8h8" fill="none" stroke="#323130" strokeWidth="1.500" /><path d="M31 15l-9 13-3-2z" fill="none" stroke="#323130" strokeWidth="1.300" /><path d="M18 27c3 0 4 2 3 5-1 3-5 4-9 4 2-2 3-7 6-9z" fill="#fff" stroke="#323130" strokeWidth="1.300" /></svg>
      </div>
      <svg width="224" height="10" viewBox="0 0 224 10" className="block mt-[5px]"><path d="M0 9.500h20l10-9 10 9h184" fill="none" stroke="#a19f9d" /></svg>
      <div className="grid grid-cols-[repeat(6,35px)] auto-rows-[35px] pl-[6px] pt-[8px] h-[260px] border-b border-[#e1dfdd]">
        {vizIcons.map((ic, i) => (
          <div key={i} className="flex items-center justify-center">
            <Ic>{ic}</Ic>
          </div>
        ))}
      </div>
      <div className="pl-[15px] pt-[10px] h-[36px] text-[14px] text-[#323130]">Values</div>
      <Dashed cls="h-[35px] pl-[13px]" text="Add data fields here" />
      <div className="pl-[15px] pt-[13px] h-[40px] text-[14px] font-semibold text-[#3b3a39]">Drill through</div>
      <div className="pl-[15px] pr-[26px] h-[33px] flex items-center justify-between text-[14px] text-[#323130]">
        Cross-report
        <div className="w-[40px] h-[20px] rounded-full border border-[#8a8886] bg-white flex items-center pl-[5px] gap-[2px] text-[10.500px] text-[#605e5c]">
          <span className="w-[10px] h-[10px] rounded-full bg-[#605e5c]" />
          Off
        </div>
      </div>
      <div className="pl-[15px] pr-[26px] h-[34px] flex items-center justify-between text-[14px] text-[#323130]">
        Keep all filters
        <div className="w-[40px] h-[20px] rounded-full bg-[#117865] flex items-center justify-between pl-[5px] pr-[5px] text-[10.500px] text-white">
          On
          <span className="w-[10px] h-[10px] rounded-full bg-white" />
        </div>
      </div>
      <div className="h-[6px]" />
      <Dashed cls="h-[32px] pl-[10px]" text="Add drill-through fields here" />
    </div>
  );
}

function DataPane() {
  return (
    <div className="flex-1 bg-[#f3f2f1] h-[790px]">
      <div className="h-[57px] flex items-center pl-[11px] pr-[7px] pb-[8px]">
        <span className="text-[19px] font-semibold text-[#252423]">Data</span>
        <span className="ml-auto"><Chev /></span>
      </div>
      <div className="ml-[6px] w-[215px] h-[33px] bg-white border border-[#605e5c] rounded-[2px] flex items-center pl-[9px] gap-[6px] text-[17px] text-[#3b3a39]">
        <SearchIc s={19} />
        Search
      </div>
      <div className="pt-[10px] pl-[9px]">
        {["Orders", "People", "Returns"].map((n) => (
          <div key={n} className="h-[30px] flex items-center text-[14px] text-[#3b3a39]">
            <Chev dir="one" c="#605e5c" s={15} />
            <svg width="17" height="16" viewBox="0 0 17 16" className="ml-[5px] mr-[7px] shrink-0"><path d="M.5.500h16v15H.5zM.5 4h16M.5 8h16M.5 12h16M6 .500v15M11.500.500v15" fill="none" stroke="#3b3a39" /></svg>
            {n}
          </div>
        ))}
      </div>
    </div>
  );
}

function PageTabs() {
  return (
    <div className="h-[44px] bg-[#f3f2f1] flex items-stretch pl-[57px]">
      <div className="w-[42px] flex items-center gap-[21px] pb-[2px]">
        <svg width="6" height="10" viewBox="0 0 6 10"><path d="M5 0v10L0 5z" fill="#d2d0ce" /></svg>
        <svg width="6" height="10" viewBox="0 0 6 10"><path d="M1 0v10l5-5z" fill="#d2d0ce" /></svg>
      </div>
      <div className="w-[95px] bg-white border-x border-[#d2d0ce] border-b-[5px] border-b-[#117865] flex items-center justify-center text-[14px] text-[#252423] font-medium pt-[2px]">Page 1</div>
      <div className="w-[49px] h-[40px] mt-[2px] bg-[#117865] flex items-center justify-center">
        <svg width="14" height="14" viewBox="0 0 14 14"><path d="M7 0v14M0 7h14" stroke="#fff" strokeWidth="3" /></svg>
      </div>
    </div>
  );
}

function StatusBar() {
  return (
    <div className="h-[29px] bg-[#f3f2f1] border-t border-[#e1dfdd] flex items-center pl-[7px] text-[14px] text-[#605e5c] border-b-[1px] border-b-black box-content">
      <span className="whitespace-nowrap">Page 1 of 1</span>
      <span className="ml-[1325px] text-[#323130] text-[16px] leading-none">-</span>
      <div className="ml-[6px] w-[125px] h-[1px] bg-[#605e5c] relative">
        <div className="absolute left-[42px] top-[-6px] w-[5px] h-[13px] bg-[#605e5c]" />
        <div className="absolute left-[62px] top-[-3px] w-[1px] h-[7px] bg-[#605e5c]" />
      </div>
      <span className="ml-[7px] text-[#323130] text-[17px] leading-none">+</span>
      <span className="ml-[22px] w-[30px] text-[#605e5c] whitespace-nowrap">73%</span>
      <svg width="20" height="18" viewBox="0 0 20 18" className="ml-[22px] shrink-0"><rect x=".5" y=".5" width="19" height="17" fill="#e1dfdd" stroke="#8a8886" /><path d="M4 7V4h3M13 4h3v3M16 11v3h-3M7 14H4v-3" fill="none" stroke="#323130" /></svg>
      <span className="ml-[23px] text-[14.300px] whitespace-nowrap">Update available (click to download)</span>
    </div>
  );
}

function TaskBar() {
  return (
    <div className="h-[60px] bg-[#d9d9d9] flex items-center relative text-[#252423]">
      <svg width="30" height="30" viewBox="0 0 30 30" className="ml-[25px] shrink-0"><ellipse cx="15" cy="15" rx="13" ry="14" fill="#f7a711" /><path d="M2 9h26M0 14h24M3 19h27M5 24h18" stroke="#f3e6cc" strokeWidth="2.500" /></svg>
      <div className="ml-[9px] w-[60px] text-[14px] leading-[20px] mb-[2px]">
        <div>29°C</div>
        <div className="text-[#484644]">Haze</div>
      </div>
      <svg width="30" height="30" viewBox="0 0 30 30" className="ml-[488px] shrink-0"><rect width="14.500" height="14.500" fill="#3cb6ef" /><rect x="15.500" width="14.500" height="14.500" fill="#2da7e8" /><rect y="15.500" width="14.500" height="14.500" fill="#1c8fdb" /><rect x="15.500" y="15.500" width="14.500" height="14.500" fill="#0c78cf" /></svg>
      <div className="ml-[16px] w-[273px] h-[38px] rounded-full bg-[#f3f3f3] border border-[#cfcfcf] flex items-center pl-[14px] text-[14.500px] text-[#484644] relative overflow-hidden shrink-0">
        <svg width="20" height="20" viewBox="0 0 20 20"><circle cx="9" cy="9" r="6.500" fill="none" stroke="#1f1f1f" strokeWidth="2" /><path d="M13 13.500l5 5" stroke="#1f1f1f" strokeWidth="2" /></svg>
        <span className="ml-[11px]">Search</span>
        <svg width="62" height="36" viewBox="0 0 62 36" className="absolute right-[1px] top-[1px]"><path d="M28 10L46 2l12 8 3 16-16 2z" fill="#5a77bd" /><path d="M0 34C12 22 26 16 44 20c8 2 14 2 18 0v16H0z" fill="#5aa36a" /><path d="M20 33c10-8 24-10 40-8v11H20z" fill="#3aa3d6" /><path d="M12 30c8-4 14-6 24-6" stroke="#e8d892" strokeWidth="2" fill="none" /></svg>
      </div>
      <svg width="28" height="28" viewBox="0 0 28 28" className="ml-[15px] shrink-0"><defs><linearGradient id="tv" x1="0" y1="0" x2="0" y2="1"><stop offset="0" stopColor="#f5f5f5" /><stop offset="0.6" stopColor="#9a9a9a" /><stop offset="0.61" stopColor="#1f1f1f" /><stop offset="1" stopColor="#1f1f1f" /></linearGradient></defs><rect width="28" height="28" rx="2" fill="url(#tv)" /><rect x="0" y="0" width="12" height="17" fill="#f3f3f3" /></svg>
      <svg width="30" height="36" viewBox="0 0 30 36" className="ml-[28px] shrink-0"><path d="M15 1c8 0 14 7 14 16s-6 16-14 16c-2 0-4 0-6 2-1-2-1-3-3-5C3 27 1 22 1 17 1 8 7 1 15 1z" fill="#6264c8" /><rect x="8" y="12" width="10" height="11" rx="2" fill="#fff" /><path d="M19 15l4-2v9l-4-2z" fill="#fff" /></svg>
      <svg width="32" height="36" viewBox="0 0 32 36" className="ml-[25px] shrink-0"><path d="M1 2h12l3 4h15v30H1z" fill="#f5c22b" /><path d="M1 2h12l3 4v2H1z" fill="#d99a1f" /><rect x="7" y="24" width="18" height="12" rx="1" fill="#0b78c9" /><rect x="10" y="29" width="12" height="2" fill="#fff" /></svg>
      <div className="ml-[24px] w-[30px] h-[40px] relative shrink-0 mt-[2px]">
        <svg width="30" height="38" viewBox="0 0 30 38"><path d="M15 6C8 6 2 12 2 19c0 3 1 5 2 7l-2 8 8-2c2 1 3 1 5 1 7 0 13-6 13-14S22 6 15 6z" fill="#48c858" stroke="#f3f3f3" strokeWidth="2" /><path d="M10 14c-2 5 5 12 10 11l2-3-3-2-2 1c-2-1-3-3-4-4l1-2-2-3z" fill="#fff" /></svg>
        <div className="absolute left-[16px] top-[-5px] w-[20px] h-[20px] rounded-full bg-[#24808f] text-white text-[13px] flex items-center justify-center">5</div>
        <div className="absolute left-[11px] top-[38px] w-[8px] h-[8px] rounded-full bg-[#7a7a7a]" />
      </div>
      <div className="ml-[26px] w-[26px] h-[37px] relative shrink-0">
        <div className="w-[26px] h-[37px] bg-[#1a1a1a] border-[3px] border-[#d6d93a] border-l-[#5fc953] text-[#f3f3f3] text-[12px] font-bold leading-[12px] pl-[3px] pt-[5px] font-['Liberation_Sans',sans-serif]">PC<div className="w-[8px] h-[2px] bg-white mt-[7px]" /></div>
        <div className="absolute left-[9px] top-[39px] w-[8px] h-[8px] rounded-full bg-[#7a7a7a]" />
      </div>
      <div className="ml-[28px] w-[30px] h-[38px] relative shrink-0">
        <svg width="30" height="38" viewBox="0 0 30 38"><circle cx="15" cy="19" r="14.500" fill="#1b8ad6" /><path d="M2 12C6 2 26 1 29 17c0 5-6 7-11 6 3-5-1-9-7-8-4 1-7 3-9-3z" fill="#3bd1b8" /><path d="M5 27c-2-8 5-14 11-12 3 1 4 4 2 7 3 3 7 2 9 0-3 10-18 12-22 5z" fill="#0f5fb0" /></svg>
        <div className="absolute left-[11px] top-[38px] w-[8px] h-[8px] rounded-full bg-[#7a7a7a]" />
      </div>
      <div className="ml-[16px] w-[47px] h-[48px] bg-[#ececec] rounded-[4px] flex flex-col items-center pt-[9px] shrink-0 relative">
        <svg width="24" height="30" viewBox="0 0 24 30"><rect x="13" width="9" height="30" fill="#e09c13" /><rect x="7" y="9" width="9" height="21" fill="#f2c811" /><rect x="1" y="17" width="9" height="13" fill="#f7de7a" /></svg>
        <div className="absolute bottom-[1px] w-[20px] h-[3px] bg-[#24808f] rounded-full" />
      </div>
      <svg width="16" height="10" viewBox="0 0 16 10" className="ml-[238px] shrink-0"><path d="M1 9l7-7 7 7" fill="none" stroke="#1f1f1f" strokeWidth="1.500" /></svg>
      <svg width="22" height="18" viewBox="0 0 22 18" className="ml-[21px] shrink-0"><path d="M5 17h12c5 0 5-7 0-7-1-8-10-8-11-2-5 0-5 9-1 9z" fill="#f3f3f3" stroke="#1f1f1f" strokeWidth="1.200" /></svg>
      <div className="ml-[19px] w-[40px] text-[14px] leading-[20px] text-center">
        <div>ENG</div>
        <div>INTL</div>
      </div>
      <svg width="22" height="20" viewBox="0 0 22 20" className="ml-[15px] shrink-0"><path d="M1 7c6-6 14-6 20 0M4 10c4-4 10-4 14 0M7 13c2-2 6-2 8 0" fill="none" stroke="#1f1f1f" strokeWidth="1.500" /><circle cx="11" cy="17" r="1.800" fill="#1f1f1f" /></svg>
      <svg width="20" height="20" viewBox="0 0 20 20" className="ml-[9px] shrink-0"><path d="M1 7h4l5-5v16l-5-5H1z" fill="none" stroke="#1f1f1f" strokeWidth="1.300" /><path d="M13 6c2 2 2 6 0 8M16 3c3 4 3 10 0 14" fill="none" stroke="#1f1f1f" strokeWidth="1.200" /></svg>
      <svg width="22" height="16" viewBox="0 0 22 16" className="ml-[9px] shrink-0"><rect x="1" y="1" width="17" height="14" rx="3" fill="none" stroke="#1f1f1f" strokeWidth="1.500" /><rect x="3.500" y="3.500" width="9" height="9" fill="#1f1f1f" /><rect x="19" y="5" width="2" height="6" fill="#1f1f1f" /></svg>
      <div className="ml-[7px] w-[90px] text-[14.500px] leading-[20px] text-right whitespace-nowrap">
        <div>12:31</div>
        <div>15/11/2023</div>
      </div>
      <svg width="18" height="20" viewBox="0 0 18 20" className="ml-[11px] shrink-0"><path d="M9 1c4 0 5 4 5 8 0 3 3 5 3 7H1c0-2 3-4 3-7 0-4 1-8 5-8z" fill="#174a56" /><path d="M6 17h6c0 3-6 3-6 0z" fill="#174a56" /></svg>
    </div>
  );
}

export default function App() {
  return (
    <div className="w-[1920px] h-[1080px] overflow-hidden bg-[#f3f2f1] font-['Open_Sans',sans-serif]">
      <TitleBar />
      <Ribbon />
      <div className="flex h-[790px]">
        <div className="w-[1469px] shrink-0">
          <div className="flex h-[746px] bg-[#f3f2f1]">
            <Rail />
            <Canvas />
            <FiltersPane />
          </div>
          <PageTabs />
        </div>
        <VizPane />
        <DataPane />
      </div>
      <StatusBar />
      <TaskBar />
    </div>
  );
}
